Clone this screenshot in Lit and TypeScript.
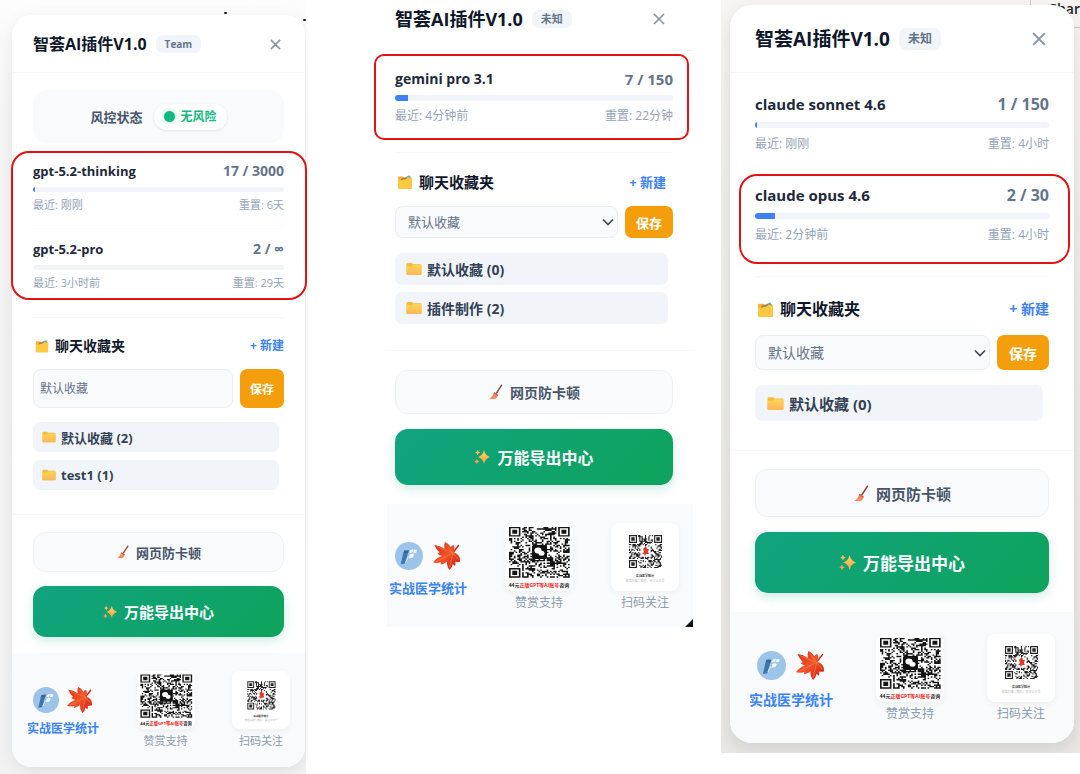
import { LitElement, html, svg, css, nothing } from "lit";
import { customElement, property } from "lit/decorators.js";
import { classMap } from "lit/directives/class-map.js";
import { styleMap } from "lit/directives/style-map.js";

interface Usage {
  name: string;
  used: string;
  limit: string;
  percent: number;
  last: string;
  reset: string;
}

interface PanelData {
  size: "small" | "medium" | "large";
  badge: string;
  risk?: string;
  usage: Usage[];
  /** Index of the usage rows that carry a red outline. */
  marked: number[];
  folders: string[];
  chevron: boolean;
}

/* ---------- QR artwork ---------- */

function qrPath(n: number, seed: number, hole: number): string {
  let s = seed;
  const rnd = () => {
    s = (s * 1103515245 + 12345) % 2147483648;
    return s / 2147483648;
  };
  const mid = n / 2;
  let d = "";
  const corners = [
    [0, 0],
    [n - 7, 0],
    [0, n - 7],
  ];
  for (let y = 0; y < n; y++) {
    for (let x = 0; x < n; x++) {
      const dark = rnd() > 0.54;
      const inFinder = corners.some(
        ([cx, cy]) => x >= cx - 1 && x <= cx + 7 && y >= cy - 1 && y <= cy + 7
      );
      const inHole = Math.abs(x + 0.5 - mid) < hole && Math.abs(y + 0.5 - mid) < hole;
      if (dark && !inFinder && !inHole) d += `M${x} ${y}h1v1h-1z`;
    }
  }
  for (const [x, y] of corners) {
    d += `M${x} ${y}h7v7h-7zM${x + 1} ${y + 1}v5h5v-5zM${x + 2} ${y + 2}h3v3h-3z`;
  }
  return d;
}

const payPath = qrPath(37, 77, 5);
const followPath = qrPath(29, 1234, 4.5);

const payCode = svg`<svg class="qr" viewBox="0 0 68 68" role="img" aria-label="赞赏支持">
  <path d=${payPath} fill="#151515" transform="translate(4 4) scale(1.64 1.37)"/>
  <rect x="27" y="22" width="15" height="14" rx="1.500" fill="#111"/>
  <ellipse cx="33" cy="27.500" rx="3.600" ry="3" fill="#fff"/>
  <ellipse cx="36.500" cy="30.200" rx="3" ry="2.500" fill="#fff"/>
  <text x="34" y="63.500" text-anchor="middle" font-size="5" font-weight="700" fill="#222">44元<tspan fill="#f02020">正版GPT等AI账号</tspan>咨询</text>
</svg>`;

const followCode = svg`<svg class="qr" viewBox="0 0 68 68" role="img" aria-label="扫码关注">
  <path d=${followPath} fill="#222" transform="translate(18 12) scale(1.14)"/>
  <path d="M32 26l3-3 1 3 2 0-1 3 1 2-3 0-1 2-1-2-2 0 2-2z" fill="#e33a28"/>
  <text x="34" y="53.500" text-anchor="middle" font-size="3" font-weight="700" fill="#333">实战医学统计</text>
  <text x="34" y="59" text-anchor="middle" font-size="3" fill="#b8b8b8">微信扫描二维码，关注公众号</text>
</svg>`;

/* ---------- Icons ---------- */

const closeIcon = svg`<svg class="close-icon" viewBox="0 0 12 12" aria-hidden="true">
  <path d="M1 1l10 10M11 1L1 11" stroke="#8a95a8" stroke-width="1.700" fill="none"/>
</svg>`;

const organizerIcon = svg`<svg class="emoji" viewBox="0 0 16 16" aria-hidden="true">
  <path d="M1 3.400q0-.9.9-.9h4l1 1.200h7.100q1 0 1 1V14q0 1-1 1H2q-1 0-1-1z" fill="#f5b33a"/>
  <path d="M7 3.700l5.500-2.500 1.500 2.500z" fill="#6fae9a"/>
  <path d="M3.500 4.700l4-1.400.8 1.400z" fill="#e8704e"/>
  <path d="M1 6h5.500l1.400-1.500H15V14q0 1-1 1H2q-1 0-1-1z" fill="#fdc842"/>
  <path d="M4 5.800l2.600-1 1 .2 2.400-1.200" stroke="#6c6a3b" stroke-width=".8" fill="none"/>
</svg>`;

const folderIcon = svg`<svg class="emoji" viewBox="0 0 16 16" aria-hidden="true">
  <defs><linearGradient id="fold" x1="0" y1="0" x2="0" y2="1"><stop offset="0" stop-color="#ffd457"/><stop offset="1" stop-color="#fbb757"/></linearGradient></defs>
  <path d="M.5 3q0-1 1-1h4.300l1.200 1.200h7.500q1 0 1 1V13q0 1-1 1h-13q-1 0-1-1z" fill="#f6bb3c"/>
  <path d="M.5 5.200h5.300l1.200-1.200h8.500V13q0 1-1 1h-13q-1 0-1-1z" fill="url(#fold)"/>
</svg>`;

const broomIcon = svg`<svg class="emoji" viewBox="0 0 16 16" aria-hidden="true">
  <path d="M13.600 1.200L8.300 9.300" stroke="#8d4a45" stroke-width="1.500" stroke-linecap="round"/>
  <path d="M6.200 8.300l3.800 2.500q-.4 3.600-3.200 4.200H1.500q3.500-2.500 4.700-6.700z" fill="#f58b5b"/>
  <path d="M6.200 8.300l3.800 2.500-.4 1.200-4-2.500z" fill="#d9534a"/>
</svg>`;

const sparkleIcon = svg`<svg class="emoji spark" viewBox="0 0 16 16" aria-hidden="true">
  <defs><linearGradient id="spark" x1="0" y1="0" x2="0" y2="1"><stop offset="0" stop-color="#ffd65c"/><stop offset="1" stop-color="#f79a4d"/></linearGradient></defs>
  <path d="M10 1.200Q11.300 6.500 16 8 11.300 9.500 10 14.800 8.700 9.500 4 8 8.700 6.500 10 1.200z" fill="url(#spark)"/>
  <path d="M3.700.8Q4.200 2.800 6.200 3.500 4.200 4.200 3.700 6.200 3.200 4.200 1.200 3.500 3.200 2.800 3.700.8z" fill="#fbb95a"/>
  <path d="M2.800 9.800Q3.300 11.800 5.300 12.500 3.300 13.200 2.800 15.200 2.300 13.200.3 12.500 2.300 11.800 2.800 9.800z" fill="#f79a5a"/>
</svg>`;

const brandIcon = svg`<svg class="mark" viewBox="0 0 28 28" aria-hidden="true">
  <circle cx="14" cy="14" r="14" fill="#9cc3e8"/>
  <path d="M8.500 10l5-.8-3.500 12.300-4.300.8z" fill="#3c78ae"/>
  <path d="M9 8.500l5-.3-1 2.500-4.300.3z" fill="#2f6599"/>
  <path d="M15 8.500l3.300-1.300-.8 3-3 1.200zM19 7.500l3 .6-.9 2.800-2.900-.2zM14.500 12.800l3-1.200 1.700 1-1.500 2.900-3.600 1z" fill="#f4faff"/>
  <path d="M10.500 20.500l3-6" stroke="#dcecfa" stroke-width="1"/>
</svg>`;

const leafIcon = svg`<svg class="mark" viewBox="0 0 28 28" aria-hidden="true">
  <defs><linearGradient id="leaf" x1="0" y1="0" x2="1" y2="1"><stop offset="0" stop-color="#dc2314"/><stop offset=".5" stop-color="#f2552a"/><stop offset="1" stop-color="#c80f10"/></linearGradient></defs>
  <path d="M25.500 3.500l-5 6.500" stroke="#c22a1c" stroke-width="1.500" stroke-linecap="round"/>
  <path d="M20.500 10.500Q22.500 5.500 20.500 3 18.500 3.500 17.800 5 15.500 1.500 12 0 10.500 3 11.500 6.800 7 3.500 1.500 3 3 7.500 6.500 10.500L4.500 11.800Q6.500 13.600 9 14 3.500 15.500 0 20.500 4.500 21.500 8 20.200L7.500 22.500Q11.500 22 14 19.500 13.500 24 16.500 28 19.500 25.500 19.800 22L22 24Q23 22 22.300 19.800 25.500 20.500 27 19.500 27.500 14.500 23.500 11.500z" fill="url(#leaf)"/>
  <path d="M20 11L4 4.500M20 11L13 2.500M20 11L3 19.500M20 11L16.500 25.500M20 11l5.500 7" stroke="#f98b45" stroke-width=".6" fill="none"/>
</svg>`;

/* ---------- Panel ---------- */

@customElement("plugin-panel")
export class PluginPanel extends LitElement {
  @property({ attribute: false }) data!: PanelData;

  static styles = css`
    :host {
      display: block;
    }
    * {
      box-sizing: border-box;
    }
    h1,
    h2,
    p,
    ul {
      margin: 0;
      padding: 0;
    }
    button,
    select {
      font-family: inherit;
      margin: 0;
      cursor: pointer;
    }
    .panel {
      background: #fff;
      color: #1e293b;
      border-radius: var(--corner);
      font-family: "Open Sans", "Noto Sans CJK SC", sans-serif;
    }
    .small {
      --corner: 20px;
      --side: 21px;
      --right: 21px;
      --head: 18px 21px 17px;
      --title: 16px;
      --title-line: 22px;
      --badge: 10px;
      --badge-line: 18px;
      --body-top: 17px;
      --name: 13px;
      --count: 14px;
      --name-line: 20px;
      --bar: 5px;
      --bar-gap: 6px 0 5px;
      --meta: 11px;
      --meta-line: 16px;
      --row-after: 12px;
      --row-before: 13px;
      --usage-after: 26px;
      --sec-before: 17px;
      --sec: 14px;
      --sec-line: 22px;
      --link: 12px;
      --field-gap: 12px;
      --field: 39px;
      --field-font: 12px;
      --field-pad: 6px;
      --save: 44px;
      --list-before: 14px;
      --folder: 30px;
      --folder-font: 13px;
      --folder-gap: 8px;
      --folder-pad: 9px;
      --list-side: 5px;
      --list-after: 24px;
      --act-before: 17px;
      --plain: 40px;
      --act-font: 13px;
      --act-gap: 14px;
      --main: 51px;
      --main-font: 15px;
      --act-after: 16px;
      --foot: 18px 15px 19px;
      --mark: 26px;
      --mark-gap: 8px;
      --brand-before: 16px;
      --brand-gap: 7px;
      --brand-font: 12px;
      --brand-line: 18px;
      --card: 58px;
      --caption: 11px;
      --caption-line: 14px;
      --caption-gap: 5px;
      --emoji: 14px;
      --x: 11px;
      box-shadow: 0 4px 16px rgba(0, 0, 0, 0.08);
    }
    .medium {
      --corner: 0;
      --side: 8px;
      --right: 20px;
      --head: 7px 25px 19px 8px;
      --title: 18px;
      --title-line: 24px;
      --badge: 11px;
      --badge-line: 18px;
      --body-top: 18px;
      --name: 14px;
      --count: 15px;
      --name-line: 20px;
      --bar: 6px;
      --bar-gap: 6px 0 7px;
      --meta: 12px;
      --meta-line: 16px;
      --row-after: 15px;
      --row-before: 15px;
      --usage-after: 28px;
      --sec-before: 18px;
      --sec: 15px;
      --sec-line: 22px;
      --link: 13px;
      --field-gap: 13px;
      --field: 32px;
      --field-font: 13px;
      --field-pad: 12px;
      --save: 48px;
      --list-before: 15px;
      --folder: 32px;
      --folder-font: 14px;
      --folder-gap: 7px;
      --folder-pad: 11px;
      --list-side: 5px;
      --list-after: 26px;
      --act-before: 19px;
      --plain: 44px;
      --act-font: 14px;
      --act-gap: 15px;
      --main: 56px;
      --main-font: 16px;
      --act-after: 19px;
      --foot: 19px 14px 16px 2px;
      --mark: 28px;
      --mark-gap: 10px;
      --brand-before: 19px;
      --brand-gap: 9px;
      --brand-font: 13px;
      --brand-line: 18px;
      --card: 68px;
      --caption: 12px;
      --caption-line: 16px;
      --caption-gap: 4px;
      --emoji: 16px;
      --x: 12px;
    }
    .large {
      --corner: 22px;
      --side: 25px;
      --right: 25px;
      --head: 20px 25px 19px 25px;
      --title: 19px;
      --title-line: 28px;
      --badge: 12px;
      --badge-line: 22px;
      --body-top: 20px;
      --name: 15px;
      --count: 16px;
      --name-line: 22px;
      --bar: 6px;
      --bar-gap: 7px 0;
      --meta: 12px;
      --meta-line: 18px;
      --row-after: 15px;
      --row-before: 15px;
      --usage-after: 32px;
      --sec-before: 20px;
      --sec: 16px;
      --sec-line: 24px;
      --link: 14px;
      --field-gap: 14px;
      --field: 35px;
      --field-font: 14px;
      --field-pad: 12px;
      --save: 52px;
      --list-before: 15px;
      --folder: 36px;
      --folder-font: 15px;
      --folder-gap: 8px;
      --folder-pad: 12px;
      --list-side: 6px;
      --list-after: 29px;
      --act-before: 18px;
      --plain: 48px;
      --act-font: 15px;
      --act-gap: 15px;
      --main: 61px;
      --main-font: 17px;
      --act-after: 19px;
      --foot: 22px 19px 21px;
      --mark: 29px;
      --mark-gap: 10px;
      --brand-before: 17px;
      --brand-gap: 10px;
      --brand-font: 14px;
      --brand-line: 20px;
      --card: 68px;
      --caption: 12px;
      --caption-line: 16px;
      --caption-gap: 4px;
      --emoji: 17px;
      --x: 14px;
      box-shadow: 0 6px 16px rgba(0, 0, 0, 0.1);
    }
    .head {
      display: flex;
      align-items: center;
      gap: 9px;
      padding: var(--head);
      border-bottom: 1px solid #f3f5f8;
    }
    .title {
      font-size: var(--title);
      line-height: var(--title-line);
      font-weight: 700;
      color: #0f172a;
      white-space: nowrap;
    }
    .badge {
      padding: 0 9px;
      border-radius: 7px;
      background: #f1f5f9;
      color: #64748b;
      font-size: var(--badge);
      line-height: var(--badge-line);
      font-weight: 700;
    }
    .close {
      display: grid;
      margin-left: auto;
      padding: 3px;
      border: 0;
      background: none;
    }
    .close-icon {
      width: var(--x);
      height: var(--x);
    }
    .body {
      padding: var(--body-top) var(--right) 0 var(--side);
    }
    .risk {
      display: flex;
      align-items: center;
      justify-content: center;
      gap: 11px;
      height: 53px;
      margin-bottom: 18px;
      border-radius: 14px;
      background: #f8fafc;
      color: #475569;
      font-size: 13px;
      line-height: 18px;
    }
    .risk-label {
      font-weight: 600;
    }
    .pill {
      display: flex;
      align-items: center;
      gap: 6px;
      padding: 4px 10px;
      border-radius: 13px;
      background: #fff;
      color: #10b981;
      font-size: 12px;
      font-weight: 700;
      box-shadow: 0 1px 3px rgba(15, 23, 42, 0.1);
    }
    .dot {
      width: 11px;
      height: 11px;
      border-radius: 50%;
      background: #10b981;
      box-shadow: 0 0 5px rgba(16, 185, 129, 0.4);
    }
    .usage {
      position: relative;
    }
    .row + .row {
      margin-top: var(--row-after);
      padding-top: var(--row-before);
      border-top: 1px solid #f8fafc;
    }
    .large .row + .row {
      border-color: transparent;
    }
    .line {
      display: flex;
      justify-content: space-between;
    }
    .name {
      font-size: var(--name);
      line-height: var(--name-line);
      font-weight: 700;
    }
    .count {
      color: #64748b;
      font-size: var(--count);
    }
    .track {
      height: var(--bar);
      margin: var(--bar-gap);
      border-radius: 3px;
      background: #f1f5f9;
      overflow: hidden;
    }
    .fill {
      height: 100%;
      background: #3b82f6;
    }
    .meta {
      color: #94a3b8;
      font-size: var(--meta);
      line-height: var(--meta-line);
    }
    .row {
      position: relative;
    }
    .outline {
      position: absolute;
      border: 2px solid #e01414;
      border-radius: 18px;
      pointer-events: none;
    }
    .small .outline {
      inset: -10px -23px -9px -22px;
    }
    .medium .outline {
      inset: -15px -16px -16px -21px;
      border-radius: 10px;
    }
    .large .outline {
      inset: 5px -21px -20px -16px;
    }
    .section {
      display: flex;
      align-items: center;
      justify-content: space-between;
      margin-top: var(--usage-after);
      padding-top: var(--sec-before);
      border-top: 1px solid #f5f7fa;
    }
    .section-title {
      display: flex;
      align-items: center;
      gap: 6px;
      padding-left: 2px;
      color: #0f172a;
      font-size: var(--sec);
      line-height: var(--sec-line);
      font-weight: 700;
    }
    .emoji {
      flex: none;
      width: var(--emoji);
      height: var(--emoji);
    }
    .create {
      padding: 0;
      border: 0;
      background: none;
      color: #3b82f6;
      font-size: var(--link);
      line-height: var(--sec-line);
      font-weight: 700;
    }
    .medium .create {
      padding-right: 7px;
    }
    .form {
      display: grid;
      grid-template-columns: minmax(0, 1fr) var(--save);
      gap: 7px;
      margin-top: var(--field-gap);
    }
    .field {
      display: grid;
      align-items: center;
    }
    .select {
      grid-area: 1 / 1;
      width: 100%;
      height: var(--field);
      padding: 0 var(--field-pad);
      appearance: none;
      border: 1px solid #e9eef4;
      border-radius: 8px;
      background: #f8fafc;
      color: #64748b;
      font-size: var(--field-font);
    }
    .chevron {
      grid-area: 1 / 1;
      justify-self: end;
      width: 12px;
      height: 8px;
      margin-right: 4px;
      pointer-events: none;
    }
    .save {
      height: var(--field);
      padding: 0;
      border: 0;
      border-radius: 7px;
      background: #f59e0b;
      color: #fff;
      font-size: var(--field-font);
      font-weight: 700;
    }
    .folders {
      display: grid;
      gap: var(--folder-gap);
      margin: var(--list-before) var(--list-side) var(--list-after) 0;
      list-style: none;
    }
    .folder {
      display: flex;
      align-items: center;
      gap: 5px;
      height: var(--folder);
      padding: 0 var(--folder-pad);
      border-radius: 7px;
      background: #f1f5f9;
      color: #334155;
      font-size: var(--folder-font);
      font-weight: 700;
    }
    .actions {
      display: grid;
      gap: var(--act-gap);
      padding: var(--act-before) var(--right) var(--act-after) var(--side);
      border-top: 1px solid #f5f7fa;
    }
    .act {
      display: flex;
      align-items: center;
      justify-content: center;
      gap: 6px;
    }
    .plain {
      height: var(--plain);
      border: 1px solid #edf1f6;
      border-radius: 12px;
      background: #f8fafc;
      color: #475569;
      font-size: var(--act-font);
      font-weight: 600;
    }
    .main {
      height: var(--main);
      border: 0;
      border-radius: 13px;
      background: linear-gradient(135deg, #10a37f, #0fa35c);
      color: #fff;
      font-size: var(--main-font);
      font-weight: 700;
      gap: 7px;
      box-shadow: 0 4px 12px rgba(16, 163, 127, 0.2);
    }
    .foot {
      display: flex;
      align-items: flex-start;
      justify-content: space-between;
      padding: var(--foot);
      border-radius: 0 0 var(--corner) var(--corner);
      background: #f8fafc;
    }
    .brand {
      display: grid;
      justify-items: center;
      gap: var(--brand-gap);
      padding-top: var(--brand-before);
      color: #3b82f6;
      font-size: var(--brand-font);
      line-height: var(--brand-line);
      font-weight: 700;
      text-decoration: none;
    }
    .marks {
      display: flex;
      gap: var(--mark-gap);
    }
    .mark {
      width: var(--mark);
      height: var(--mark);
    }
    .card {
      display: grid;
      justify-items: center;
      gap: var(--caption-gap);
      color: #8d9bb0;
      font-size: var(--caption);
      line-height: var(--caption-line);
    }
    .qr {
      display: block;
      width: var(--card);
      height: var(--card);
      border-radius: 8px;
      background: #fff;
      box-shadow: 0 2px 6px rgba(15, 23, 42, 0.05);
    }
  `;

  private row(u: Usage, outlined: boolean) {
    return html`<div class="row">
      <div class="line name"><span>${u.name}</span><span class="count">${u.used} / ${u.limit}</span></div>
      <div class="track"><div class="fill" style=${styleMap({ width: `${u.percent}%` })}></div></div>
      <div class="line meta"><span>最近: ${u.last}</span><span>重置: ${u.reset}</span></div>
      ${outlined ? html`<div class="outline"></div>` : nothing}
    </div>`;
  }

  render() {
    const d = this.data;
    const all = d.marked.length === d.usage.length;
    return html`<article class=${classMap({ panel: true, [d.size]: true })}>
      <header class="head">
        <h1 class="title">智荟AI插件V1.0</h1>
        <span class="badge">${d.badge}</span>
        <button class="close" aria-label="关闭">${closeIcon}</button>
      </header>
      <div class="body">
        ${d.risk
          ? html`<div class="risk">
              <span class="risk-label">风控状态</span>
              <span class="pill"><span class="dot"></span>${d.risk}</span>
            </div>`
          : nothing}
        <div class="usage">
          ${d.usage.map((u, i) => this.row(u, !all && d.marked.includes(i)))}
          ${all ? html`<div class="outline"></div>` : nothing}
        </div>
        <div class="section">
          <h2 class="section-title" id="favorites">${organizerIcon}聊天收藏夹</h2>
          <button class="create">+ 新建</button>
        </div>
        <div class="form">
          <div class="field">
            <select class="select" aria-labelledby="favorites">
              <option>默认收藏</option>
            </select>
            ${d.chevron
              ? html`<svg class="chevron" viewBox="0 0 12 8" aria-hidden="true">
                  <path d="M1 1.500l5 5 5-5" fill="none" stroke="#3f4854" stroke-width="1.700" />
                </svg>`
              : nothing}
          </div>
          <button class="save">保存</button>
        </div>
        <ul class="folders">
          ${d.folders.map((f) => html`<li class="folder">${folderIcon}<span>${f}</span></li>`)}
        </ul>
      </div>
      <div class="actions">
        <button class="act plain">${broomIcon}<span>网页防卡顿</span></button>
        <button class="act main">${sparkleIcon}<span>万能导出中心</span></button>
      </div>
      <footer class="foot">
        <a class="brand" href="#">
          <span class="marks">${brandIcon}${leafIcon}</span>
          <span>实战医学统计</span>
        </a>
        <div class="card">${payCode}<span>赞赏支持</span></div>
        <div class="card">${followCode}<span>扫码关注</span></div>
      </footer>
    </article>`;
  }
}

/* ---------- Page ---------- */

const chatgpt: PanelData = {
  size: "small",
  badge: "Team",
  risk: "无风险",
  usage: [
    { name: "gpt-5.2-thinking", used: "17", limit: "3000", percent: 0.6, last: "刚刚", reset: "6天" },
    { name: "gpt-5.2-pro", used: "2", limit: "∞", percent: 0, last: "3小时前", reset: "29天" },
  ],
  marked: [0, 1],
  folders: ["默认收藏 (2)", "test1 (1)"],
  chevron: false,
};

const gemini: PanelData = {
  size: "medium",
  badge: "未知",
  usage: [
    { name: "gemini pro 3.1", used: "7", limit: "150", percent: 4.7, last: "4分钟前", reset: "22分钟" },
  ],
  marked: [0],
  folders: ["默认收藏 (0)", "插件制作 (2)"],
  chevron: true,
};

const claude: PanelData = {
  size: "large",
  badge: "未知",
  usage: [
    { name: "claude sonnet 4.6", used: "1", limit: "150", percent: 0.7, last: "刚刚", reset: "4小时" },
    { name: "claude opus 4.6", used: "2", limit: "30", percent: 6.7, last: "2分钟前", reset: "4小时" },
  ],
  marked: [1],
  folders: ["默认收藏 (0)"],
  chevron: true,
};

@customElement("app-root")
export class AppRoot extends LitElement {
  static styles = css`
    :host {
      display: grid;
      grid-template-columns: 306fr 415fr 359fr;
      align-items: start;
      min-height: 100vh;
      background: #fff;
    }
    .shot {
      position: relative;
      box-sizing: border-box;
    }
    .first {
      min-height: 100vh;
      padding: 15px 1px 7px 12px;
      background: linear-gradient(#fdfdfd, #f5f5f5 15%, #f2f2f2);
      clip-path: inset(0 -2px 0 0);
    }
    .speck {
      position: absolute;
      width: 3px;
      height: 2px;
      border-radius: 1px;
      background: #222;
    }
    .speck-left {
      top: 12px;
      right: 79px;
    }
    .speck-right {
      top: 19px;
      right: 0;
    }
    .second {
      padding: 0 28px 0 81px;
    }
    .cut {
      position: relative;
    }
    .corner {
      position: absolute;
      right: 0;
      bottom: 0;
      width: 8px;
      height: 8px;
      background: #111;
      clip-path: polygon(100% 0, 100% 100%, 0 100%);
    }
    .third {
      padding: 5px 6px 10px 9px;
      background: linear-gradient(#f6f5f2, #eeeeea 30%, #e8e7e4);
      clip-path: inset(0);
    }
    .behind {
      position: absolute;
      top: 0;
      right: 0;
      box-sizing: border-box;
      height: 28px;
      padding-left: 18px;
      border-left: 1px solid #c9c8c4;
      border-bottom: 1px solid #c9c8c4;
      color: #222;
      font: 600 14px/18px "Open Sans", sans-serif;
      white-space: nowrap;
    }
    .front {
      position: relative;
    }
  `;

  render() {
    return html`
      <section class="shot first">
        <span class="speck speck-left"></span>
        <plugin-panel .data=${chatgpt}></plugin-panel>
        <span class="speck speck-right"></span>
      </section>
      <section class="shot second">
        <div class="cut">
          <plugin-panel .data=${gemini}></plugin-panel>
          <span class="corner"></span>
        </div>
      </section>
      <section class="shot third">
        <span class="behind">Shar</span>
        <plugin-panel class="front" .data=${claude}></plugin-panel>
      </section>
    `;
  }
}
